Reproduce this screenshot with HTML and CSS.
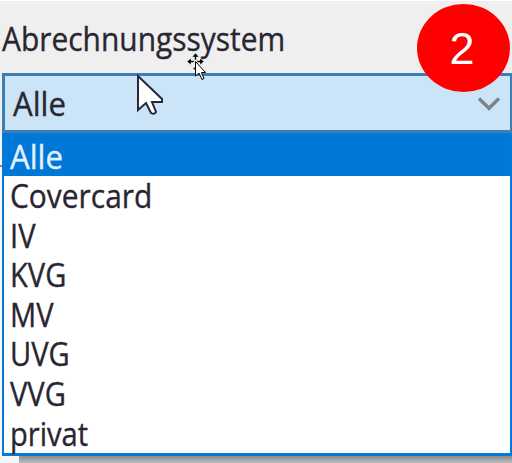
FILE: index.html
```html
<!DOCTYPE html>
<html lang="de">
<head>
<meta charset="utf-8">
<title>Abrechnungssystem</title>
<link rel="stylesheet" href="styles.css">
</head>
<body>
<main class="panel">
  <div class="label"><span class="text medium">Abrechnungssystem</span></div>
  <div class="combo">
    <span class="text wide">Alle</span>
    <svg class="chevron" width="24" height="16" viewBox="0 0 24 16"><path d="M2 2.5 12 12.3 22 2.5"/></svg>
  </div>
  <ul class="list">
    <li class="selected"><span class="text wide">Alle</span></li>
    <li><span class="text medium">Covercard</span></li>
    <li><span class="text">IV</span></li>
    <li><span class="text">KVG</span></li>
    <li><span class="text">MV</span></li>
    <li><span class="text">UVG</span></li>
    <li><span class="text">VVG</span></li>
    <li><span class="text">privat</span></li>
  </ul>
  <div class="shadow"></div>
  <div class="tick"></div>
  <div class="badge">2</div>
  <svg class="pointer" width="28" height="42" viewBox="0 0 28 42"><path d="M2 2V36L10 29L15 39Q18 41 20 38L16 28H26V25Z"/></svg>
  <svg class="move" width="20" height="28" viewBox="0 0 20 28">
    <path class="arrows" d="M8.5 0 12 4H9.5V7H7.5V4H5ZM0 8.5 4 5V7.5H7V9.5H4V12ZM17 8.5 13 5V7.5H10V9.5H13V12ZM7.5 14H8V17H7L6 15Z"/>
    <path class="arrow" d="M8.5 8.5V23L12 20L15 26.5L17 25.5L14.5 19.5H18.5Z"/>
  </svg>
</main>
</body>
</html>
```
FILE: styles.css
```css
* { box-sizing: border-box; }
body {
  margin: 0;
  background: #efefef;
  font: 32px/40px "Open Sans", "Noto Sans", sans-serif;
  color: #292632;
}
.panel {
  position: relative;
  width: 512px;
  height: 463px;
  overflow: hidden;
  border-top: 1px solid #fff;
  background: linear-gradient(#efefef 133px, #f6f6f6 133px);
}
.text {
  display: inline-block;
  white-space: nowrap;
  transform: scaleX(.91);
  transform-origin: left;
  -webkit-text-stroke: .35px currentColor;
}
.medium { transform: scaleX(.935); }
.wide { transform: scaleX(.975); }
.label { height: 72px; padding: 18px 0 0 2px; }
.combo {
  display: flex;
  align-items: center;
  justify-content: space-between;
  height: 60px;
  margin-left: 2px;
  padding: 1px 9px 0 8px;
  border: 3px solid #3b7fb5;
  border-right-width: 2px;
  background: #cce4f7;
}
.chevron { fill: none; stroke: #78838b; stroke-width: 3.4; }
.list {
  height: 323px;
  margin: 0 0 0 2px;
  padding: 0;
  list-style: none;
  border: solid #0878d7;
  border-width: 1px 2px 3px;
  background: #fff;
}
.list li { height: 39.6px; padding-left: 6px; line-height: 40px; }
.list .selected {
  height: 42px;
  line-height: 45px;
  background: #0078d7;
  color: #e2f1ff;
}
.shadow {
  height: 8px;
  margin-left: 19px;
  background: linear-gradient(#8b8b8b, #c3c3c3);
}
.tick { position: absolute; left: 0; top: 164px; width: 2px; height: 2px; background: #888; }
.badge {
  position: absolute;
  left: 417px;
  top: 3px;
  width: 93px;
  height: 88px;
  padding-right: 3px;
  border-radius: 50%;
  background: #f00;
  color: #fff;
  font: 45px/89px "Liberation Sans", Arial, sans-serif;
  text-align: center;
}
.pointer { position: absolute; left: 136px; top: 73px; fill: #fff; stroke: #25283a; stroke-width: 2; }
.move { position: absolute; left: 187px; top: 52px; }
.arrows { fill: #000; stroke: #fff; stroke-width: .5; }
.arrow { fill: #fff; stroke: #000; }
```
